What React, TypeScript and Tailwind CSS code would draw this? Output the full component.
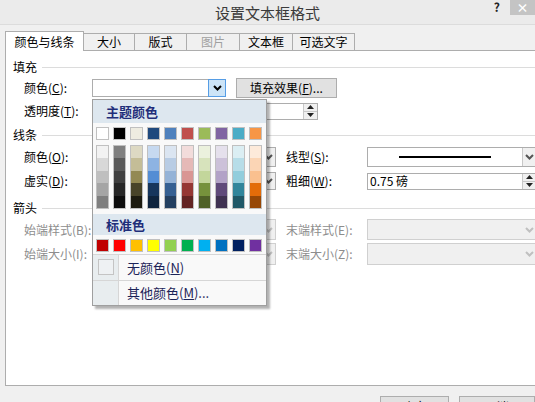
import React from 'react';

const themeTop = ['#ffffff', '#000000', '#eeece1', '#1f497d', '#4f81bd', '#c0504d', '#9bbb59', '#8064a2', '#4bacc6', '#f79646'];

const themeShades = [
  ['#f2f2f2', '#d8d8d8', '#bfbfbf', '#a5a5a5', '#7f7f7f'],
  ['#7f7f7f', '#595959', '#3f3f3f', '#262626', '#0c0c0c'],
  ['#ddd9c3', '#c4bd97', '#938953', '#494429', '#1d1b10'],
  ['#c6d9f0', '#8db3e2', '#548dd4', '#17365d', '#0f243e'],
  ['#dbe5f1', '#b8cce4', '#95b3d7', '#366092', '#244061'],
  ['#f2dcdb', '#e5b9b7', '#d99694', '#953734', '#632423'],
  ['#ebf1dd', '#d7e3bc', '#c3d69b', '#76923c', '#4f6128'],
  ['#e5e0ec', '#ccc1d9', '#b2a2c7', '#5f497a', '#3f3151'],
  ['#dbeef3', '#b7dde8', '#92cddc', '#31859b', '#205867'],
  ['#fdeada', '#fbd5b5', '#fac08f', '#e36c09', '#974806'],
];

const standard = ['#c00000', '#ff0000', '#ffc000', '#ffff00', '#92d050', '#00b050', '#00b0f0', '#0070c0', '#002060', '#7030a0'];

function Chevron({ color = '#000000' }: { color?: string }) {
  return (
    <svg width="9" height="6" viewBox="0 0 9 6">
      <path d="M1 1l3.5 3.5L8 1" fill="none" stroke={color} strokeWidth="2" />
    </svg>
  );
}

function SpinArrows() {
  return (
    <div className="flex h-full w-[14px] flex-col border-l border-[#c8c8c8]">
      <div className="flex flex-1 items-center justify-center border-b border-[#c8c8c8] bg-[#f0f0f0]">
        <svg width="7" height="4" viewBox="0 0 7 4">
          <path d="M0 4h7L3.5 0z" fill="#222" />
        </svg>
      </div>
      <div className="flex flex-1 items-center justify-center bg-[#f0f0f0]">
        <svg width="7" height="4" viewBox="0 0 7 4">
          <path d="M0 0h7L3.5 4z" fill="#222" />
        </svg>
      </div>
    </div>
  );
}

function SectionHeader({ title }: { title: string }) {
  return (
    <div className="flex h-[14px] items-center pl-[7px]">
      <span className="leading-none">{title}</span>
      <div className="ml-[5px] h-px flex-1 bg-[#dcdcdc]" />
    </div>
  );
}

function Label({ children, disabled, className = 'w-[68px]' }: { children: React.ReactNode; disabled?: boolean; className?: string }) {
  return (
    <span className={`${className} shrink-0 whitespace-nowrap leading-none ${disabled ? 'text-[#8d8d8d]' : 'text-black'}`}>
      {children}
    </span>
  );
}

export default function App() {
  return (
    <div className="relative h-[402px] w-[535px] overflow-hidden bg-[#f0f0f0] font-[Noto_Sans_CJK_SC,Liberation_Sans,sans-serif] text-[12px] text-black">
      {/* title bar */}
      <div className="grid h-[25px] grid-cols-[1fr_auto_1fr] border-b border-[#dcdcdc] bg-[#ebebeb]">
        <div />
        <span className="self-center text-[15px] leading-none text-[#3a3a3a]">设置文本框格式</span>
        <div className="flex items-start justify-end">
          <span className="mr-[10px] mt-[1px] text-[12px] font-bold leading-[12px] text-[#222]">?</span>
          <div className="flex h-[15px] w-[25px] items-center justify-center bg-[#c4c4c4] text-[12px] font-bold leading-none text-white">×</div>
        </div>
      </div>

      {/* tabs */}
      <div className="mt-[6px] flex h-[19px] items-end pl-[5px]">
        <div className="relative z-10 -mb-px flex h-[20px] w-[79px] items-center justify-center border-x border-t border-[#adadad] bg-white leading-none">颜色与线条</div>
        <div className="-ml-px flex h-[17px] w-[52px] items-center justify-center border-x border-t border-[#adadad] bg-[#f0f0f0] leading-none">大小</div>
        <div className="-ml-px flex h-[17px] w-[53px] items-center justify-center border-x border-t border-[#adadad] bg-[#f0f0f0] leading-none">版式</div>
        <div className="-ml-px flex h-[17px] w-[54px] items-center justify-center border-x border-t border-[#adadad] bg-[#f0f0f0] leading-none text-[#a0a0a0]">图片</div>
        <div className="-ml-px flex h-[17px] w-[54px] items-center justify-center border-x border-t border-[#adadad] bg-[#f0f0f0] leading-none">文本框</div>
        <div className="-ml-px flex h-[17px] w-[63px] items-center justify-center border-x border-t border-[#adadad] bg-[#f0f0f0] leading-none">可选文字</div>
      </div>

      {/* panel */}
      <div className="ml-[5px] h-[336px] w-[540px] border border-[#adadad] bg-white">
        <div className="mt-[9px]">
          <SectionHeader title="填充" />
        </div>

        <div className="mt-[4px] flex h-[20px] items-center pl-[18px]">
          <Label>颜色(<u>C</u>):</Label>
          <div className="flex h-[18px] w-[134px] border border-[#adadad] bg-white">
            <div className="flex-1" />
            <div className="-my-px -mr-px flex w-[18px] items-center justify-center border border-[#569de5] bg-[#cce4f7]">
              <Chevron />
            </div>
          </div>
          <div className="ml-[10px] flex h-[20px] w-[101px] items-center justify-center border border-[#adadad] bg-[#e1e1e1] leading-none">
            填充效果(<u>F</u>)...
          </div>
        </div>

        <div className="mt-[4px] flex h-[18px] items-center pl-[18px]">
          <Label>透明度(<u>T</u>):</Label>
          <div className="h-[4px] w-[150px] border border-[#d6d6d6] bg-[#e7e7e7]" />
          <div className="ml-[8px] flex h-[17px] w-[68px] border border-[#adadad] bg-white">
            <div className="flex-1" />
            <SpinArrows />
          </div>
        </div>

        <div className="mt-[8px]">
          <SectionHeader title="线条" />
        </div>

        <div className="mt-[5px] flex h-[20px] items-center pl-[18px]">
          <Label>颜色(<u>O</u>):</Label>
          <div className="flex h-[20px] w-[184px] border border-[#adadad] bg-white">
            <div className="flex-1" />
            <div className="flex w-[14px] items-center justify-center border-l border-[#c8c8c8] bg-[#f0f0f0]">
              <Chevron color="#555555" />
            </div>
          </div>
          <Label className="ml-[10px] w-[81px]">线型(<u>S</u>):</Label>
          <div className="flex h-[20px] w-[170px] border border-[#adadad] bg-white">
            <div className="flex flex-1 items-center pl-[31px]">
              <div className="h-[1.5px] w-[92px] bg-black" />
            </div>
            <div className="flex w-[14px] items-center justify-center border-l border-[#c8c8c8] bg-[#f0f0f0]">
              <Chevron color="#555555" />
            </div>
          </div>
        </div>

        <div className="mt-[5px] flex h-[18px] items-center pl-[18px]">
          <Label>虚实(<u>D</u>):</Label>
          <div className="flex h-[18px] w-[184px] border border-[#adadad] bg-white">
            <div className="flex-1" />
            <div className="flex w-[14px] items-center justify-center border-l border-[#c8c8c8] bg-[#f0f0f0]">
              <Chevron color="#555555" />
            </div>
          </div>
          <Label className="ml-[10px] w-[81px]">粗细(<u>W</u>):</Label>
          <div className="flex h-[17px] w-[170px] border border-[#adadad] bg-white">
            <span className="flex flex-1 items-center pl-[2px] leading-none">0.75 磅</span>
            <SpinArrows />
          </div>
        </div>

        <div className="mt-[11px]">
          <SectionHeader title="箭头" />
        </div>

        <div className="mt-[4px] flex h-[21px] items-center pl-[18px]">
          <Label disabled>始端样式(B):</Label>
          <div className="flex h-[21px] w-[184px] border border-[#d0d0d0] bg-[#f0f0f0]">
            <div className="flex-1" />
            <div className="flex w-[14px] items-center justify-center">
              <Chevron color="#c0c0c0" />
            </div>
          </div>
          <Label disabled className="ml-[10px] w-[81px]">末端样式(E):</Label>
          <div className="flex h-[21px] w-[170px] border border-[#d0d0d0] bg-[#f0f0f0]">
            <div className="flex-1" />
            <div className="flex w-[14px] items-center justify-center">
              <Chevron color="#c0c0c0" />
            </div>
          </div>
        </div>

        <div className="mt-[3px] flex h-[22px] items-center pl-[18px]">
          <Label disabled>始端大小(I):</Label>
          <div className="flex h-[22px] w-[184px] border border-[#d0d0d0] bg-[#f0f0f0]">
            <div className="flex-1" />
            <div className="flex w-[14px] items-center justify-center">
              <Chevron color="#c0c0c0" />
            </div>
          </div>
          <Label disabled className="ml-[10px] w-[81px]">末端大小(Z):</Label>
          <div className="flex h-[22px] w-[170px] border border-[#d0d0d0] bg-[#f0f0f0]">
            <div className="flex-1" />
            <div className="flex w-[14px] items-center justify-center">
              <Chevron color="#c0c0c0" />
            </div>
          </div>
        </div>
      </div>

      {/* bottom buttons */}
      <div className="mt-[10px] flex gap-[10px] pl-[380px]">
        <div className="flex h-[22px] w-[72px] justify-center border border-[#adadad] bg-[#e1e1e1] pt-[4px] leading-none">确定</div>
        <div className="flex h-[22px] w-[80px] justify-center border border-[#adadad] bg-[#e1e1e1] pt-[4px] leading-none">取消</div>
      </div>

      {/* colour drop-down */}
      <div className="absolute left-[92px] top-[99px] z-20 flex h-[207px] w-[175px] flex-col border border-[#9f9f9f] bg-[#f9f9f9] shadow-[3px_3px_2px_rgba(0,0,0,0.3)]">
        <div className="flex h-[23px] shrink-0 items-center bg-[#dde7ef] pl-[13px] text-[13px] font-bold leading-none text-[#1f2e7a]">主题颜色</div>
        <div className="mt-[4px] flex gap-[4px] pl-[3px]">
          {themeTop.map((c) => (
            <div key={c} className="h-[13px] w-[13px] border border-[#c0c0c0]" style={{ backgroundColor: c }} />
          ))}
        </div>
        <div className="mt-[5px] flex gap-[4px] pl-[3px]">
          {themeShades.map((col, i) => (
            <div key={i} className="flex w-[13px] flex-col border border-[#c0c0c0]">
              {col.map((c) => (
                <div key={c} className="h-[12.4px]" style={{ backgroundColor: c }} />
              ))}
            </div>
          ))}
        </div>
        <div className="mt-[5px] flex h-[21px] shrink-0 items-center bg-[#dde7ef] pl-[13px] text-[13px] font-bold leading-none text-[#1f2e7a]">标准色</div>
        <div className="mt-[4px] flex gap-[4px] pl-[3px]">
          {standard.map((c) => (
            <div key={c} className="h-[13px] w-[13px] border border-[#c0c0c0]" style={{ backgroundColor: c }} />
          ))}
        </div>
        <div className="mt-[2px] flex h-[26px] border-t border-[#d6d6d6]">
          <div className="flex w-[26px] items-center justify-center border-r border-[#d6d6d6] bg-[#e8edef]">
            <div className="h-[16px] w-[16px] border border-[#c4c4c4] bg-[#eef1f3]" />
          </div>
          <span className="flex items-center pl-[8px] text-[13px] leading-none text-[#1c2458]">
            无颜色(<u>N</u>)
          </span>
        </div>
        <div className="flex flex-1 border-t border-[#d6d6d6]">
          <div className="w-[26px] border-r border-[#d6d6d6] bg-[#e8edef]" />
          <span className="flex items-center pl-[8px] text-[13px] leading-none text-[#1c2458]">
            其他颜色(<u>M</u>)...
          </span>
        </div>
      </div>
    </div>
  );
}
